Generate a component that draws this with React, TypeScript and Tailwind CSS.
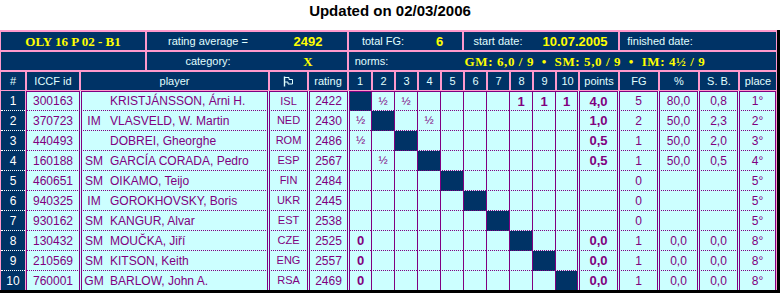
type Row = {
  n: number
  id: string
  t: string
  name: string
  fed: string
  rt: string
  res: string[]
  pts: string
  fg: string
  pc: string
  sb: string
  pl: string
}

const rows: Row[] = [
  { n: 1, id: "300163", t: "", name: "KRISTJÁNSSON, Árni H.", fed: "ISL", rt: "2422", res: ["", "½", "½", "", "", "", "", "1", "1", "1"], pts: "4,0", fg: "5", pc: "80,0", sb: "0,8", pl: "1°" },
  { n: 2, id: "370723", t: "IM", name: "VLASVELD, W. Martin", fed: "NED", rt: "2430", res: ["½", "", "", "½", "", "", "", "", "", ""], pts: "1,0", fg: "2", pc: "50,0", sb: "2,3", pl: "2°" },
  { n: 3, id: "440493", t: "", name: "DOBREI, Gheorghe", fed: "ROM", rt: "2486", res: ["½", "", "", "", "", "", "", "", "", ""], pts: "0,5", fg: "1", pc: "50,0", sb: "2,0", pl: "3°" },
  { n: 4, id: "160188", t: "SM", name: "GARCÍA CORADA, Pedro", fed: "ESP", rt: "2567", res: ["", "½", "", "", "", "", "", "", "", ""], pts: "0,5", fg: "1", pc: "50,0", sb: "0,5", pl: "4°" },
  { n: 5, id: "460651", t: "SM", name: "OIKAMO, Teijo", fed: "FIN", rt: "2484", res: ["", "", "", "", "", "", "", "", "", ""], pts: "", fg: "0", pc: "", sb: "", pl: "5°" },
  { n: 6, id: "940325", t: "IM", name: "GOROKHOVSKY, Boris", fed: "UKR", rt: "2445", res: ["", "", "", "", "", "", "", "", "", ""], pts: "", fg: "0", pc: "", sb: "", pl: "5°" },
  { n: 7, id: "930162", t: "SM", name: "KANGUR, Alvar", fed: "EST", rt: "2538", res: ["", "", "", "", "", "", "", "", "", ""], pts: "", fg: "0", pc: "", sb: "", pl: "5°" },
  { n: 8, id: "130432", t: "SM", name: "MOUČKA, Jiří", fed: "CZE", rt: "2525", res: ["0", "", "", "", "", "", "", "", "", ""], pts: "0,0", fg: "1", pc: "0,0", sb: "0,0", pl: "8°" },
  { n: 9, id: "210569", t: "SM", name: "KITSON, Keith", fed: "ENG", rt: "2557", res: ["0", "", "", "", "", "", "", "", "", ""], pts: "0,0", fg: "1", pc: "0,0", sb: "0,0", pl: "8°" },
  { n: 10, id: "760001", t: "GM", name: "BARLOW, John A.", fed: "RSA", rt: "2469", res: ["0", "", "", "", "", "", "", "", "", ""], pts: "0,0", fg: "1", pc: "0,0", sb: "0,0", pl: "8°" },
]

const label = "flex items-center justify-center text-[11px] leading-none text-[#e0ffff]"
const yellowSans = "flex items-center justify-center text-[13px] font-bold leading-none text-[#ffff00]"
const yellowSerif = "flex items-center justify-center font-['Liberation_Serif',serif] text-[13px] font-bold leading-none text-[#ffff00]"

function FlagIcon() {
  return (
    <svg width="11" height="11" viewBox="0 0 11 11" fill="none" stroke="#e0ffff" strokeWidth="1">
      <path d="M1.5 0.5 V10.5" strokeWidth="1.4" />
      <path d="M1.5 1.5 H6 V3.5 H9.5 V8 H5 V6 H1.5" />
    </svg>
  )
}

function rowBorder(i: number) {
  if (i === 0) return "border-t border-b [border-bottom-style:dotted]"
  if (i === 9) return ""
  return "border-b [border-bottom-style:dotted]"
}

function Cell({ i, w, children, className = "" }: { i: number; w: string; children?: React.ReactNode; className?: string }) {
  return (
    <div className={`${w} flex items-center justify-center border-x border-[#800080] ${rowBorder(i)} leading-none ${className}`}>
      {children}
    </div>
  )
}

function DataRow({ r, i }: { r: Row; i: number }) {
  const rb = rowBorder(i)
  return (
    <div className={`flex ${i === 9 ? "h-[19px]" : "h-[20px]"}`}>
      <div className={`w-[24px] flex items-center justify-center bg-[#003366] text-[12px] leading-none text-white border-white ${i === 9 || i === 0 ? (i === 0 ? "border-b [border-bottom-style:dotted]" : "") : "border-b [border-bottom-style:dotted]"}`}>
        {r.n}
      </div>
      <div className="ml-px flex w-[750px] gap-px bg-[#ccffff] text-[12px] text-[#800080]">
        <Cell i={i} w="w-[54px]">{r.id}</Cell>
        <Cell i={i} w="w-[187px]" className="!justify-start">
          <span className="w-[24px] text-center">{r.t}</span>
          <span className="pl-[4px]">{r.name}</span>
        </Cell>
        <Cell i={i} w="w-[39px]" className="text-[11px]">{r.fed}</Cell>
        <Cell i={i} w="w-[39px]">{r.rt}</Cell>
        <div className="flex w-[229px]">
          {r.res.map((v, j) => (
            <div
              key={j}
              className={`${j === 0 ? "w-[22px]" : "w-[23px]"} flex items-center justify-center border-l border-[#800080] ${j === 9 ? "border-r" : ""} ${rb} leading-none ${j === i ? "bg-[#003366]" : ""} ${v === "½" ? "text-[11px]" : "text-[13px] font-bold"}`}
            >
              {v}
            </div>
          ))}
        </div>
        <Cell i={i} w="w-[39px]" className="text-[13px] font-bold">{r.pts}</Cell>
        <Cell i={i} w="w-[39px]">{r.fg}</Cell>
        <Cell i={i} w="w-[39px]">{r.pc}</Cell>
        <Cell i={i} w="w-[39px]">{r.sb}</Cell>
        <Cell i={i} w="w-[37px]">{r.pl}</Cell>
      </div>
    </div>
  )
}

export default function App() {
  const nums = ["1", "2", "3", "4", "5", "6", "7", "8", "9", "10"]
  return (
    <div className="w-[780px] bg-white font-['Liberation_Sans',Arial,sans-serif]">
      <div className="h-[30px] pt-[2px] text-center text-[15px] font-bold leading-[18px] text-black">
        Updated on 02/03/2006
      </div>
      <div className="w-[780px] border-r-[3px] border-b-[3px] border-black bg-[#ff99cc] px-px pt-[2px]">
        <div className="flex flex-col gap-[2px]">
          <div className="flex h-[18px] gap-[2px]">
            <div className={`w-[144px] bg-[#003366] ${yellowSerif}`}>OLY 16 P 02 - B1</div>
            <div className="flex w-[200px] bg-[#003366]">
              <div className={`w-[122px] ${label}`}>rating average =</div>
              <div className={`flex-1 ${yellowSans}`}>2492</div>
            </div>
            <div className="flex w-[113px] bg-[#003366]">
              <div className={`w-[68px] ${label}`}>total FG:</div>
              <div className={`flex-1 ${yellowSans}`}>6</div>
            </div>
            <div className="flex w-[154px] bg-[#003366]">
              <div className={`w-[68px] ${label}`}>start date:</div>
              <div className={`flex-1 ${yellowSans}`}>10.07.2005</div>
            </div>
            <div className="flex w-[156px] bg-[#003366]">
              <div className={`w-[80px] ${label}`}>finished date:</div>
              <div className="flex-1" />
            </div>
          </div>
          <div className="flex h-[18px] gap-[2px]">
            <div className="w-[144px] bg-[#003366]" />
            <div className="flex w-[200px] bg-[#003366]">
              <div className={`w-[122px] ${label}`}>category:</div>
              <div className={`flex-1 ${yellowSerif}`}>X</div>
            </div>
            <div className="flex w-[427px] bg-[#003366]">
              <div className={`w-[45px] ${label}`}>norms:</div>
              <div className={`flex-1 whitespace-pre tracking-[0.6px] ${yellowSerif}`}>
                {"GM: 6,0 / 9  •  SM: 5,0 / 9  •  IM: 4½ / 9"}
              </div>
            </div>
          </div>
          <div className="flex h-[18px] gap-[2px]">
            <div className={`w-[24px] bg-[#003366] ${label}`}>#</div>
            <div className={`w-[52px] bg-[#003366] ${label}`}>ICCF id</div>
            <div className={`w-[187px] bg-[#003366] ${label}`}>player</div>
            <div className={`w-[37px] bg-[#003366] ${label}`}>
              <FlagIcon />
            </div>
            <div className={`w-[38px] bg-[#003366] ${label}`}>rating</div>
            {nums.map((d, j) => (
              <div key={d} className={`${j === 0 ? "w-[22px]" : "w-[21px]"} bg-[#003366] ${label}`}>
                {d}
              </div>
            ))}
            <div className={`w-[38px] bg-[#003366] ${label}`}>points</div>
            <div className={`w-[38px] bg-[#003366] ${label}`}>FG</div>
            <div className={`w-[38px] bg-[#003366] ${label}`}>%</div>
            <div className={`w-[38px] bg-[#003366] ${label}`}>S. B.</div>
            <div className={`w-[36px] bg-[#003366] ${label}`}>place</div>
          </div>
        </div>
        <div className="mt-px">
          {rows.map((r, i) => (
            <DataRow key={r.n} r={r} i={i} />
          ))}
        </div>
      </div>
    </div>
  )
}
